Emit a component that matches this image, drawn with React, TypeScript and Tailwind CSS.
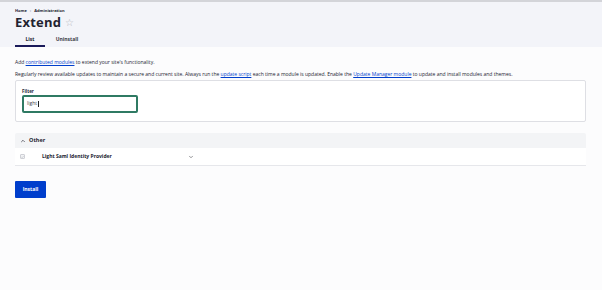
import React from "react";
import { ChevronDown, ChevronUp, Check } from "lucide-react";

const App = () => {
  return (
    <div
      className="min-h-[290px] w-[602px] bg-[#fcfcfd] text-[#222330]"
      style={{ fontFamily: '"Open Sans", "Noto Sans", sans-serif' }}
    >
      <div className="h-[2px] bg-[#d3d4d9]" />
      <header className="bg-[#f3f4f9] px-[15px] pt-[6px]">
        <nav className="flex items-center gap-[3px] text-[4px] font-bold leading-[6px] text-[#222330]">
          <span>Home</span>
          <span className="text-[#8e929c]">›</span>
          <span>Administration</span>
        </nav>
        <div className="mt-[1px] flex items-center gap-[4px]">
          <h1 className="text-[13px] font-bold leading-[14px] tracking-[0.2px]">Extend</h1>
          <span className="text-[10px] leading-none text-[#b4b6c0]">☆</span>
        </div>
        <div className="mt-[6px] flex text-[5px] font-bold leading-[7px]">
          <div className="flex w-[30px] justify-center border-b-[2px] border-[#1a1a5a] pb-[2px] pt-[1px]">
            List
          </div>
          <div className="flex w-[44px] justify-center pb-[2px] pt-[1px] text-[#3a3b48]">
            Uninstall
          </div>
        </div>
      </header>

      <main className="px-[15px] pt-[11px]">
        <p className="text-[5px] leading-[8px]">
          Add <a className="text-[#003ecc] underline">contributed modules</a> to extend your site's functionality.
        </p>
        <p className="mt-[4px] text-[5px] leading-[8px]">
          Regularly review available updates to maintain a secure and current site. Always run the{" "}
          <a className="text-[#003ecc] underline">update script</a> each time a module is updated. Enable the{" "}
          <a className="text-[#003ecc] underline">Update Manager module</a> to update and install modules and themes.
        </p>

        <div className="mt-[2px] w-[571px] rounded-[2px] border border-[#dedfe4] bg-white px-[6px] pb-[8px] pt-[7px]">
          <label className="block text-[4.5px] font-bold leading-[6px]">Filter</label>
          <div className="mt-[1px] flex h-[18px] w-[116px] items-center rounded-[2px] border-[2px] border-[#2f7a63] bg-white px-[3px] text-[5px] text-[#44454b]">
            light<span className="ml-[0.5px] h-[6px] w-[0.5px] bg-[#222]" />
          </div>
        </div>

        <section className="mt-[11px] w-[571px]">
          <div className="flex h-[15px] items-center gap-[3px] rounded-t-[2px] bg-[#f3f4f6] px-[5px] text-[5.5px] font-bold">
            <ChevronUp size={6} strokeWidth={2.5} />
            <span>Other</span>
          </div>
          <div className="flex h-[18px] items-center border-b border-[#e6e7eb] bg-white text-[5px] font-bold">
            <div className="ml-[5px] flex h-[5px] w-[5px] items-center justify-center rounded-[1px] border border-[#cfd0d6] bg-[#f3f4f6]">
              <Check size={4} strokeWidth={3} className="text-[#9a9ca6]" />
            </div>
            <span className="ml-[17px] w-[146px]">Light Saml Identity Provider</span>
            <ChevronDown size={6} strokeWidth={2.5} className="text-[#55565b]" />
          </div>
        </section>

        <button className="mt-[15px] flex h-[17px] w-[31px] items-center justify-center rounded-[1px] bg-[#003ecc] text-[5px] font-bold text-white">
          Install
        </button>
      </main>
    </div>
  );
};

export default App;
